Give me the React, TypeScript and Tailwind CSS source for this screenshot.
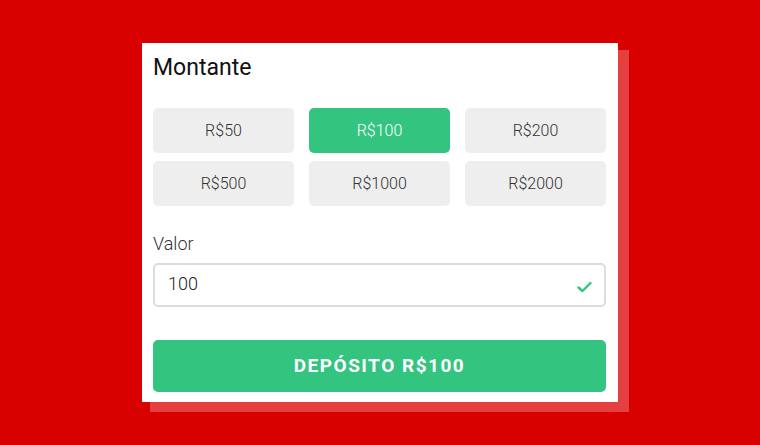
import React from "react";

const amounts = ["R$50", "R$100", "R$200", "R$500", "R$1000", "R$2000"];

export default function App() {
  const selected = "R$100";
  return (
    <div
      className="w-[760px] h-[445px] bg-[#d90000] pt-[43px] pl-[142px]"
      style={{ fontFamily: "Roboto, 'Liberation Sans', sans-serif" }}
    >
      <div className="w-[476px] h-[359px] bg-white shadow-[9.5px_8.5px_0_1.5px_#e44040] px-[11px] pt-[10px]">
        <h2 className="text-[23px] leading-[30px] font-normal text-[#111]">Montante</h2>
        <div className="grid grid-cols-3 gap-x-[15px] gap-y-[8px] mt-[25px] w-[453px]">
          {amounts.map((a) => (
            <button
              key={a}
              className={
                a === selected
                  ? "h-[45px] rounded-[5px] bg-[#33c47f] text-white text-[16px] font-light"
                  : "h-[45px] rounded-[5px] bg-[#eeeeee] text-[#333] text-[16px] font-light"
              }
            >
              {a}
            </button>
          ))}
        </div>
        <div className="mt-[25px] text-[18px] leading-[26px] font-light text-[#333]">Valor</div>
        <div className="mt-[6px] w-[453px] h-[44px] border-2 border-[#dddddd] rounded-[5px] flex items-center justify-between pl-[13px] pr-[12px]">
          <span className="text-[18px] font-light text-[#222] mb-[4px]">100</span>
          <svg width="15" height="12" viewBox="0 0 15 12" fill="none" className="mt-[3px]">
            <path d="M1.5 6.5 L5.5 10 L13.5 2" stroke="#33c47f" strokeWidth="2.4" strokeLinecap="round" strokeLinejoin="round" />
          </svg>
        </div>
        <button className="mt-[33px] w-[453px] h-[52px] rounded-[5px] bg-[#33c47f] text-white text-[19px] font-bold tracking-[1.5px]">
          DEPÓSITO R$100
        </button>
      </div>
    </div>
  );
}
